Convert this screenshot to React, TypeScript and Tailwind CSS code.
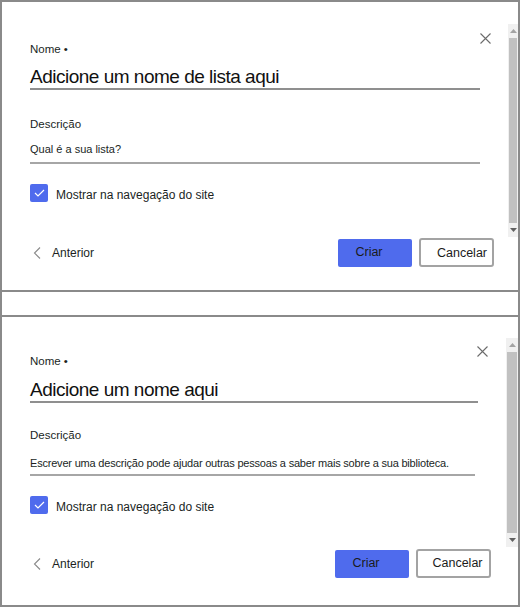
import React from 'react';

type PanelProps = {
  title: string;
  description: string;
  compact?: boolean;
};

function CloseIcon() {
  return (
    <svg width="11" height="11" viewBox="0 0 11 11" fill="none">
      <path d="M0.5 0.5L10.5 10.5M10.5 0.5L0.5 10.5" stroke="#6b6b6b" strokeWidth="1.1" />
    </svg>
  );
}

function Scrollbar({ compact }: { compact?: boolean }) {
  return (
    <div className={`flex flex-col bg-[#f0f0f0] ${compact ? 'w-[12px]' : 'w-[10px]'}`}>
      <div className="h-[14px] flex items-center justify-center">
        <svg width="7" height="4" viewBox="0 0 7 4">
          <path d="M0 4L3.5 0L7 4Z" fill="#a3a3a3" />
        </svg>
      </div>
      <div className="flex-1 bg-[#c1c1c1] mx-[1px]" />
      <div className="h-[14px] flex items-center justify-center">
        <svg width="7" height="4" viewBox="0 0 7 4">
          <path d="M0 0L3.5 4L7 0Z" fill="#606060" />
        </svg>
      </div>
    </div>
  );
}

function Panel({ title, description, compact = false }: PanelProps) {
  return (
    <div className={`relative flex flex-col ${compact ? 'pt-[21px]' : 'pt-[22px]'}`}>
      {/* close */}
      <button
        className={`absolute ${compact ? 'top-[29px] right-[30px]' : 'top-[31px] right-[27px]'} p-0`}
      >
        <CloseIcon />
      </button>

      {/* scroll body */}
      <div className={`flex ${compact ? 'h-[209px]' : 'h-[213px]'}`}>
        <div className="flex-1 flex flex-col pl-[28px] pr-[28px]">
          <div className={`text-[11.5px] leading-[16px] text-[#201f1e] ${compact ? 'mt-[15px]' : 'mt-[17px]'}`}>
            Nome •
          </div>
          <div
            className={`text-[19px] leading-[22px] tracking-[-0.5px] text-[#111] border-b-2 border-[#8f8f8f] ${compact ? 'mt-[10px]' : 'mt-[9px]'}`}
          >
            {title}
          </div>
          <div className={`text-[11.5px] leading-[16px] text-[#201f1e] ${compact ? 'mt-[24px]' : 'mt-[26px]'}`}>
            Descrição
          </div>
          <div
            className={`text-[11px] leading-[16px] text-[#201f1e] border-b-2 border-[#a6a6a6] ${compact ? 'mt-[12px] pb-[3px] mr-[3px] tracking-[-0.2px]' : 'mt-[9px] pb-[5px]'}`}
          >
            {description}
          </div>
          <label className="flex items-center gap-[8px] mt-[17px]">
            <span className="w-[18px] h-[18px] rounded-[2px] bg-[#4f6bed] flex items-center justify-center">
              <svg width="11" height="8" viewBox="0 0 11 8" fill="none">
                <path d="M1 4L4 7L10 1" stroke="#ffffff" strokeWidth="1.2" />
              </svg>
            </span>
            <span className="text-[12px] leading-[18px] pt-[5px] text-[#201f1e]">Mostrar na navegação do site</span>
          </label>
        </div>
        <Scrollbar compact={compact} />
      </div>

      {/* footer */}
      <div className={`flex items-center pl-[31px] ${compact ? 'pt-[2px] pr-[27px]' : 'pt-[1px] pr-[24px]'}`}>
        <div className="flex items-center gap-[11px] flex-1">
          <svg width="8" height="12" viewBox="0 0 8 12" fill="none">
            <path d="M7 0.5L1.5 6L7 11.5" stroke="#8a8a8a" strokeWidth="1.1" />
          </svg>
          <span className="text-[12px] leading-[18px] text-[#201f1e]">Anterior</span>
        </div>
        <button className="w-[74px] h-[28px] rounded-[2px] bg-[#4f6bed] text-[12.5px] text-[#1b1b1b] pr-[12px]">
          Criar
        </button>
        <button
          className={`ml-[7px] w-[75px] rounded-[3px] border-2 border-[#a3a3a3] bg-white text-[12.5px] text-[#1b1b1b] ${compact ? 'h-[29px] pl-[8px]' : 'h-[29px] pl-[11px] pt-[2px]'}`}
        >
          Cancelar
        </button>
      </div>
    </div>
  );
}

export default function App() {
  return (
    <div
      className="w-[520px] h-[607px] bg-white border-x-2 border-t-2 border-b-2 border-[#8a8a8a] flex flex-col overflow-hidden"
      style={{ fontFamily: '"Liberation Sans", Arial, sans-serif' }}
    >
      <div className="h-[290px] border-b-2 border-[#8a8a8a]">
        <Panel
          title="Adicione um nome de lista aqui"
          description="Qual é a sua lista?"
        />
      </div>
      <div className="h-[23px]" />
      <div className="flex-1 border-t-2 border-[#8a8a8a]">
        <Panel
          compact
          title="Adicione um nome aqui"
          description="Escrever uma descrição pode ajudar outras pessoas a saber mais sobre a sua biblioteca."
        />
      </div>
    </div>
  );
}
